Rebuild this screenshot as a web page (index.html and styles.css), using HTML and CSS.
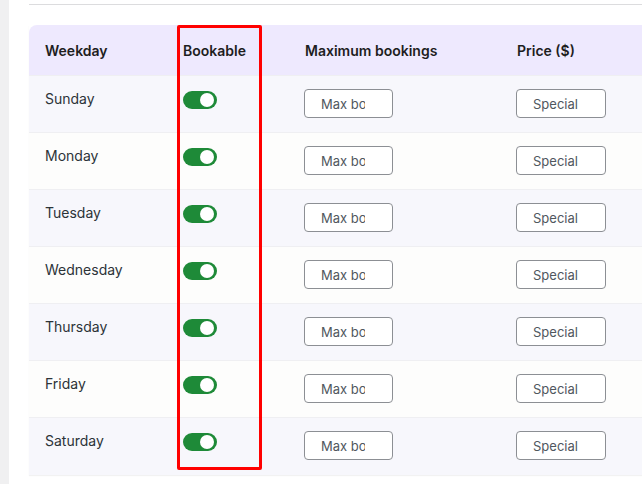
FILE: index.html
```html
<!DOCTYPE html>
<html lang="en">
<head>
    <meta charset="UTF-8">
    <meta name="viewport" content="width=device-width, initial-scale=1.0">
    <title>Weekday availability</title>
    <link rel="stylesheet" href="styles.css">
</head>
<body>

    <div class="page">
        <div class="sidebar"></div>

        <div class="main">
            <div class="divider"></div>

            <div class="table-wrap">
                <table class="schedule">
                    <colgroup>
                        <col class="col-day">
                        <col class="col-bookable">
                        <col class="col-max">
                        <col class="col-price">
                    </colgroup>
                    <thead>
                        <tr>
                            <th>Weekday</th>
                            <th>Bookable</th>
                            <th>Maximum bookings</th>
                            <th>Price ($)</th>
                        </tr>
                    </thead>
                    <tbody>
                        <tr>
                            <td>Sunday</td>
                            <td><span class="toggle"></span></td>
                            <td><input type="text" class="field" placeholder="Max bookings"></td>
                            <td><input type="text" class="field field-price" placeholder="Special price"></td>
                        </tr>
                        <tr>
                            <td>Monday</td>
                            <td><span class="toggle"></span></td>
                            <td><input type="text" class="field" placeholder="Max bookings"></td>
                            <td><input type="text" class="field field-price" placeholder="Special price"></td>
                        </tr>
                        <tr>
                            <td>Tuesday</td>
                            <td><span class="toggle"></span></td>
                            <td><input type="text" class="field" placeholder="Max bookings"></td>
                            <td><input type="text" class="field field-price" placeholder="Special price"></td>
                        </tr>
                        <tr>
                            <td>Wednesday</td>
                            <td><span class="toggle"></span></td>
                            <td><input type="text" class="field" placeholder="Max bookings"></td>
                            <td><input type="text" class="field field-price" placeholder="Special price"></td>
                        </tr>
                        <tr>
                            <td>Thursday</td>
                            <td><span class="toggle"></span></td>
                            <td><input type="text" class="field" placeholder="Max bookings"></td>
                            <td><input type="text" class="field field-price" placeholder="Special price"></td>
                        </tr>
                        <tr>
                            <td>Friday</td>
                            <td><span class="toggle"></span></td>
                            <td><input type="text" class="field" placeholder="Max bookings"></td>
                            <td><input type="text" class="field field-price" placeholder="Special price"></td>
                        </tr>
                        <tr>
                            <td>Saturday</td>
                            <td><span class="toggle"></span></td>
                            <td><input type="text" class="field" placeholder="Max bookings"></td>
                            <td><input type="text" class="field field-price" placeholder="Special price"></td>
                        </tr>
                    </tbody>
                </table>

                <div class="highlight"></div>
            </div>
        </div>
    </div>

</body>
</html>
```

FILE: styles.css
```css
/* Page structure */
body {
    margin: 0;
    padding: 0;
    background-color: #ffffff;
    font-family: 'Inter', 'Noto Sans', sans-serif;
    color: #1e1e1e;
    overflow: hidden;
}

.page {
    display: flex;
    height: 484px;
}

.sidebar {
    width: 9px;
    flex-shrink: 0;
    background-color: #f0f0f1;
}

.main {
    flex: 1;
    padding-left: 20px;
    padding-top: 4px;
    min-width: 0;
    overflow: hidden;
}

.divider {
    border-top: 1px solid #dcdcde;
    margin-bottom: 20px;
}

.table-wrap {
    position: relative;
    width: 800px;
}

/* Schedule table */
.schedule {
    width: 800px;
    border-collapse: collapse;
    table-layout: fixed;
    font-size: 14px;
    box-shadow: 0 1px 1px rgba(0, 0, 0, 0.05);
}

.col-day { width: 138px; }
.col-bookable { width: 122px; }
.col-max { width: 212px; }

.schedule thead tr {
    background-color: #eee9fe;
}

.schedule th {
    height: 50px;
    padding: 0 16px;
    text-align: left;
    font-weight: 600;
    vertical-align: middle;
    color: #1e1e1e;
}

.schedule th:first-child {
    border-top-left-radius: 8px;
}

.schedule td {
    height: 57px;
    box-sizing: border-box;
    padding: 13px 16px 0;
    vertical-align: top;
    line-height: 20px;
    border-top: 1px solid #efeff2;
    color: #2c3338;
}

.schedule tbody tr:nth-child(odd) {
    background-color: #f7f7fc;
}

.schedule tbody tr:nth-child(even) {
    background-color: #fdfdfc;
}

/* Toggle switch */
.toggle {
    position: relative;
    display: block;
    width: 34px;
    height: 18px;
    margin-top: 2px;
    border-radius: 9px;
    background-color: #1e8a38;
}

.toggle::after {
    content: "";
    position: absolute;
    top: 2px;
    right: 3px;
    width: 14px;
    height: 14px;
    border-radius: 50%;
    background-color: #ffffff;
}

/* Inputs */
.field {
    display: block;
    width: 89px;
    height: 29px;
    margin-left: -1px;
    box-sizing: border-box;
    padding: 0 27px 0 16px;
    border: 1px solid #8c8f94;
    border-radius: 4px;
    background-color: #ffffff;
    font-family: 'Inter', 'Noto Sans', sans-serif;
    font-size: 13px;
    color: #2c3338;
}

.field-price {
    width: 90px;
}

.field::placeholder {
    color: #50575e;
}

/* Annotation box */
.highlight {
    position: absolute;
    left: 148px;
    top: 0;
    width: 79px;
    height: 439px;
    border: 3px solid #ff0000;
    border-radius: 2px;
}
```
